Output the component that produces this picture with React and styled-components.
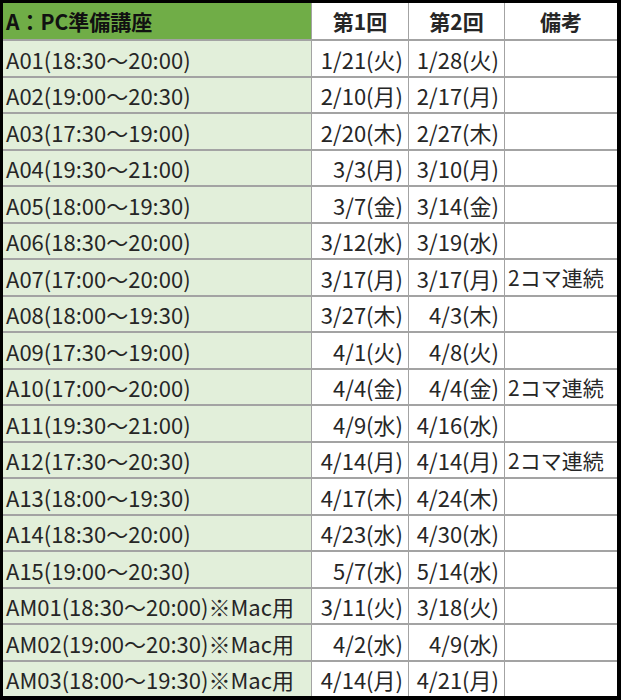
import React from 'react';
import styled, { createGlobalStyle } from 'styled-components';

const GlobalStyle = createGlobalStyle`
  html, body {
    margin: 0;
    padding: 0;
    background: #fff;
  }
  body {
    font-family: "Noto Sans CJK JP", "Noto Sans", sans-serif;
    color: #1e1e1e;
  }
`;

const rows = [
  ['A01(18:30～20:00)', '1/21(火)', '1/28(火)', ''],
  ['A02(19:00～20:30)', '2/10(月)', '2/17(月)', ''],
  ['A03(17:30～19:00)', '2/20(木)', '2/27(木)', ''],
  ['A04(19:30～21:00)', '3/3(月)', '3/10(月)', ''],
  ['A05(18:00～19:30)', '3/7(金)', '3/14(金)', ''],
  ['A06(18:30～20:00)', '3/12(水)', '3/19(水)', ''],
  ['A07(17:00～20:00)', '3/17(月)', '3/17(月)', '2コマ連続'],
  ['A08(18:00～19:30)', '3/27(木)', '4/3(木)', ''],
  ['A09(17:30～19:00)', '4/1(火)', '4/8(火)', ''],
  ['A10(17:00～20:00)', '4/4(金)', '4/4(金)', '2コマ連続'],
  ['A11(19:30～21:00)', '4/9(水)', '4/16(水)', ''],
  ['A12(17:30～20:30)', '4/14(月)', '4/14(月)', '2コマ連続'],
  ['A13(18:00～19:30)', '4/17(木)', '4/24(木)', ''],
  ['A14(18:30～20:00)', '4/23(水)', '4/30(水)', ''],
  ['A15(19:00～20:30)', '5/7(水)', '5/14(水)', ''],
  ['AM01(18:30～20:00)※Mac用', '3/11(火)', '3/18(火)', ''],
  ['AM02(19:00～20:30)※Mac用', '4/2(水)', '4/9(水)', ''],
  ['AM03(18:00～19:30)※Mac用', '4/14(月)', '4/21(月)', ''],
];

function App() {
  return (
    <>
      <GlobalStyle />
      <Sheet>
        <Grid>
          <Cell kind='title'>A：PC準備講座</Cell>
          <Cell kind='head'>第1回</Cell>
          <Cell kind='head'>第2回</Cell>
          <Cell kind='head'>備考</Cell>
          {rows.map(([name, first, second, note]) => (
            <React.Fragment key={name}>
              <Cell kind='name'>{name}</Cell>
              <Cell kind='date'>{first}</Cell>
              <Cell kind='date'>{second}</Cell>
              <Cell kind='note'>{note}</Cell>
            </React.Fragment>
          ))}
        </Grid>
      </Sheet>
    </>
  );
}

const Sheet = styled.div`
  box-sizing: border-box;
  width: 621px;
  height: 700px;
  background: #000;
  padding: 3px 4px 4px 3px;
`;

const Grid = styled.div`
  height: 100%;
  display: grid;
  grid-template-columns: 308px 96px 95px 1fr;
  grid-template-rows: 36px repeat(18, 1fr);
  column-gap: 1px;
  row-gap: 2px;
  background: #a3a3a3;
`;

const backgrounds = {
  title: '#70ad47',
  head: '#ffffff',
  name: '#e2efda',
  date: '#ffffff',
  note: '#ffffff',
};

const aligns = {
  title: 'flex-start',
  head: 'center',
  name: 'flex-start',
  date: 'flex-end',
  note: 'flex-start',
};

const sizes = {
  title: '21px',
  head: '21px',
  name: '22px',
  date: '22px',
  note: '21px',
};

const Cell = styled.div`
  display: flex;
  align-items: center;
  justify-content: ${props => aligns[props.kind]};
  background: ${props => backgrounds[props.kind]};
  padding: ${props =>
    props.kind === 'date' ? '1px 5px 0 0' : props.kind === 'head' ? '0' : '1px 0 0 3px'};
  font-size: ${props => sizes[props.kind]};
  font-weight: ${props => (props.kind === 'title' || props.kind === 'head' ? 700 : 400)};
  color: ${props => (props.kind === 'title' ? '#111' : '#262626')};
  white-space: nowrap;
  overflow: hidden;
  line-height: 1;
`;

export default App;
